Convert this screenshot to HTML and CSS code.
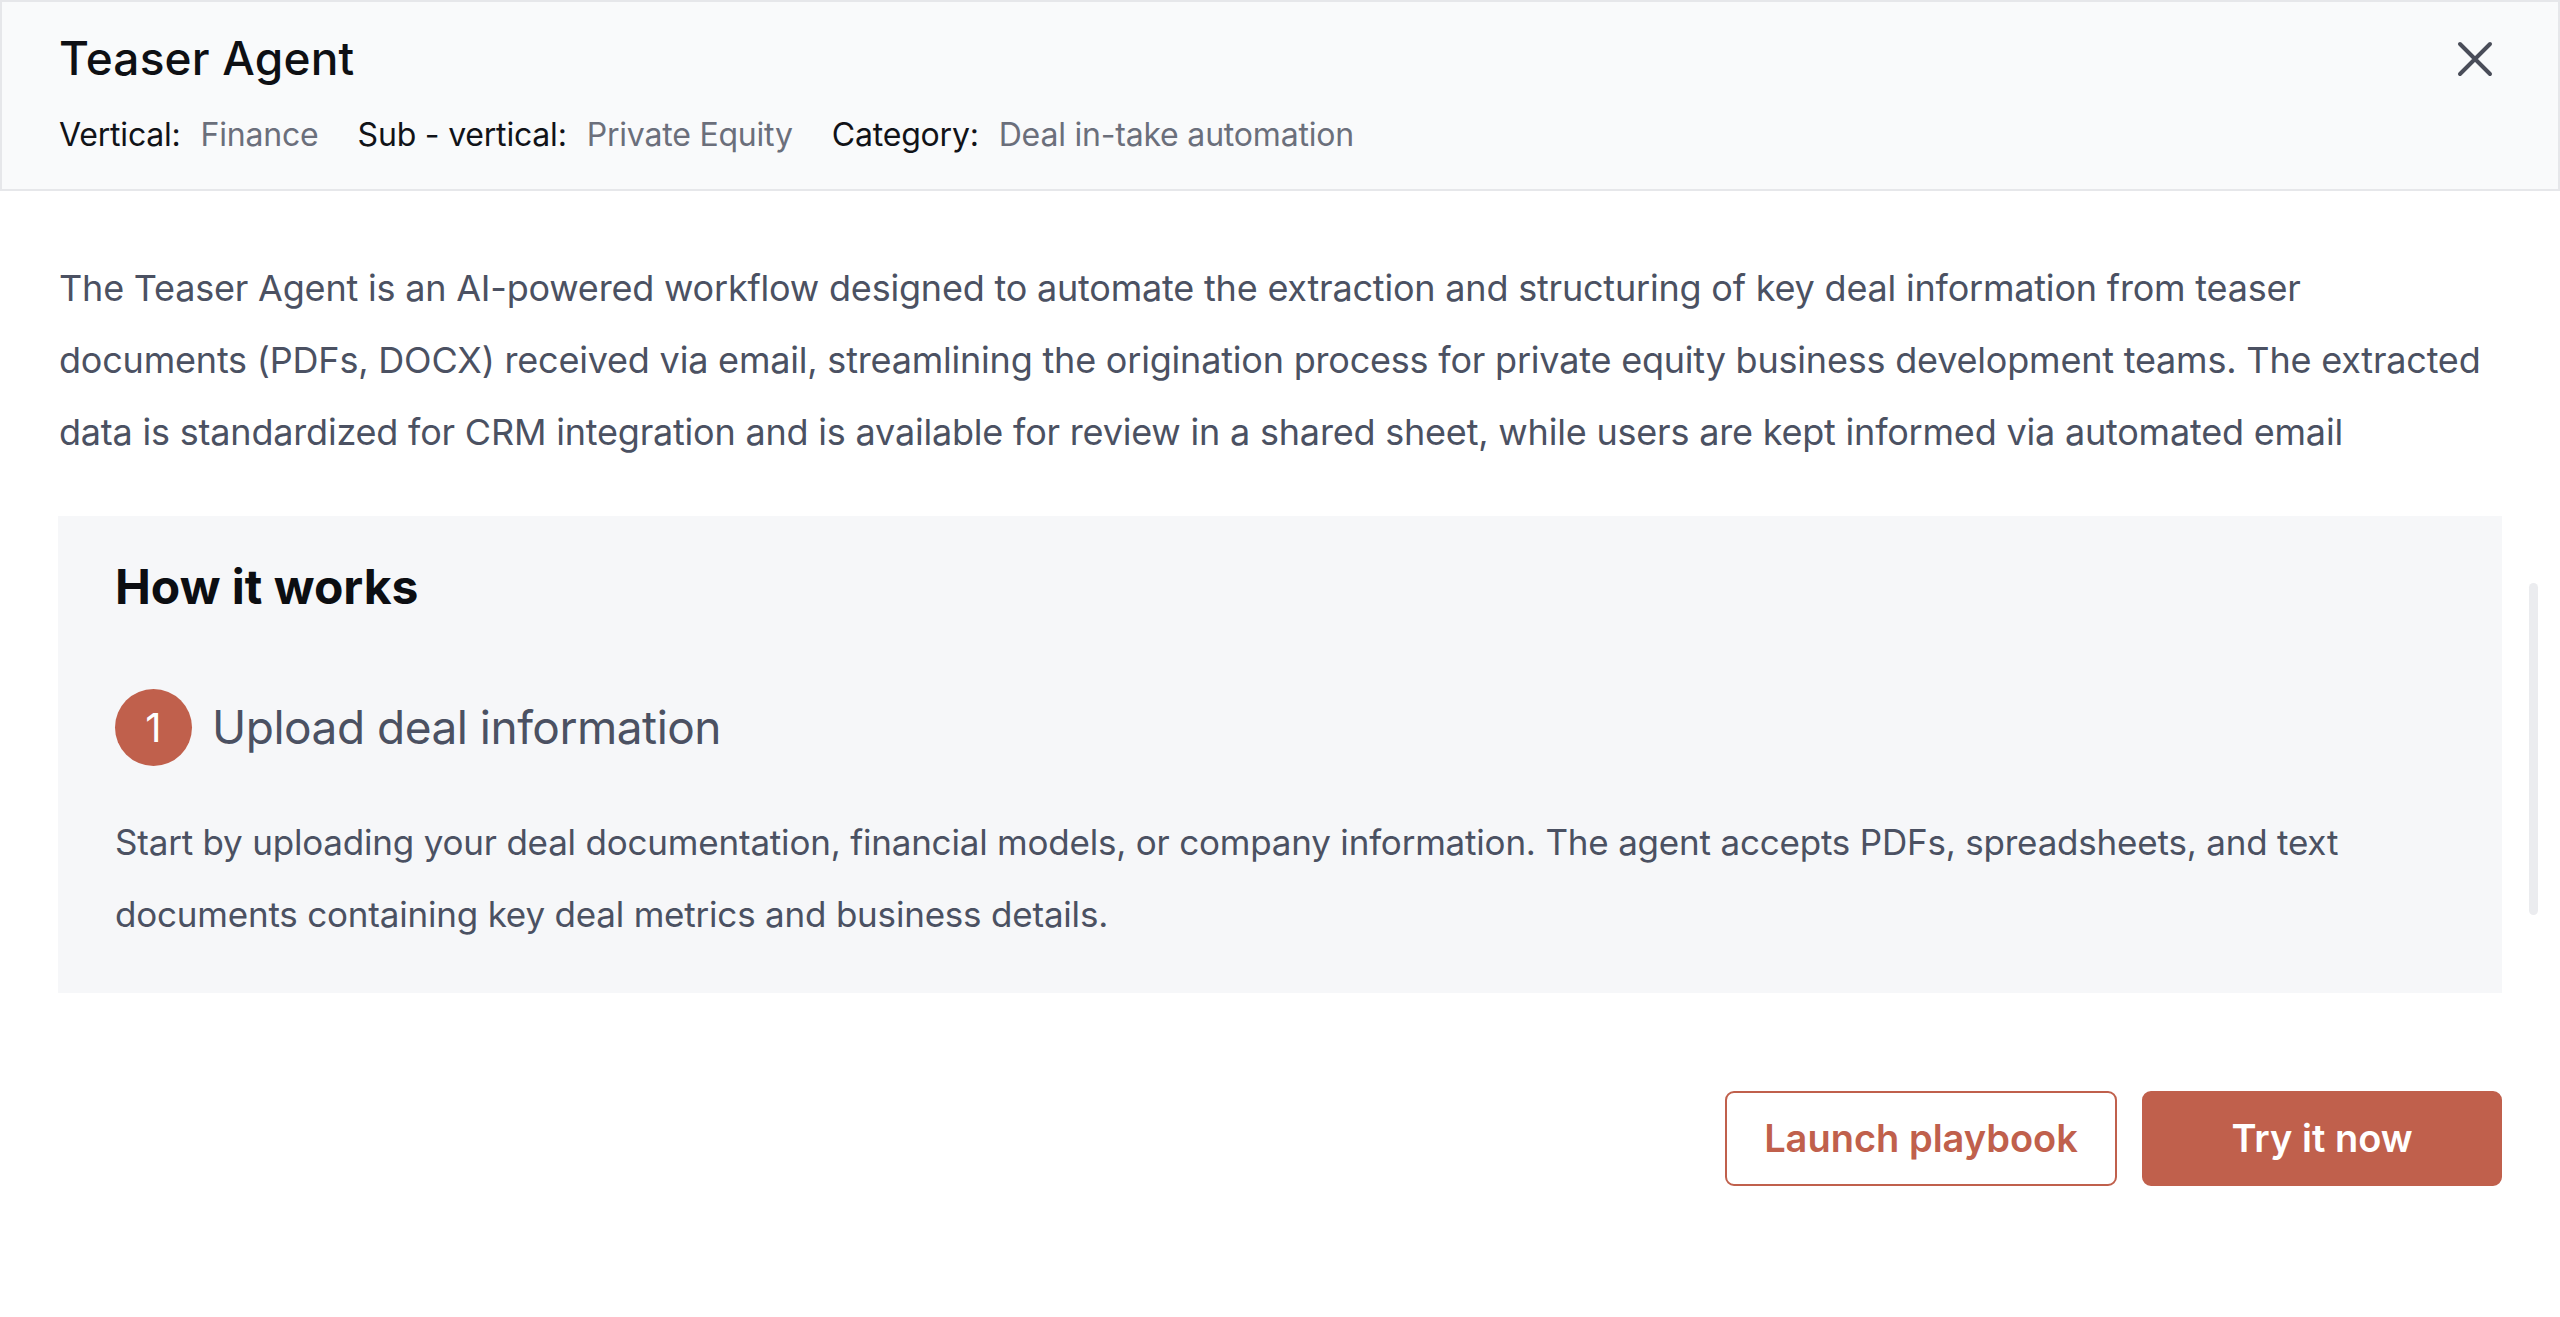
FILE: index.html
```html
<!DOCTYPE html>
<html lang="en">
<head>
<meta charset="utf-8">
<title>Teaser Agent</title>
<link rel="stylesheet" href="styles.css">
</head>
<body>
<div class="modal">
  <header class="header">
    <div class="header-text">
      <h1 class="title">Teaser Agent</h1>
      <div class="meta">
        <span class="meta-item"><span class="meta-label">Vertical:</span><span class="meta-value">Finance</span></span>
        <span class="meta-item"><span class="meta-label">Sub - vertical:</span><span class="meta-value">Private Equity</span></span>
        <span class="meta-item"><span class="meta-label">Category:</span><span class="meta-value">Deal in-take automation</span></span>
      </div>
    </div>
    <button class="close" aria-label="Close">
      <svg width="36" height="36" viewBox="0 0 36 36"><path d="M3 3 L33 33 M33 3 L3 33" stroke="#4a4d59" stroke-width="4" stroke-linecap="round" fill="none"/></svg>
    </button>
  </header>
  <main class="content">
    <p class="intro">The Teaser Agent is an AI-powered workflow designed to automate the extraction and structuring of key deal information from teaser documents (PDFs, DOCX) received via email, streamlining the origination process for private equity business development teams. The extracted data is standardized for CRM integration and is available for review in a shared sheet, while users are kept informed via automated email</p>
    <section class="how">
      <h2 class="how-title">How it works</h2>
      <div class="step">
        <span class="step-num">1</span>
        <h3 class="step-title">Upload deal information</h3>
      </div>
      <p class="step-text">Start by uploading your deal documentation, financial models, or company information. The agent accepts PDFs, spreadsheets, and text documents containing key deal metrics and business details.</p>
    </section>
    <div class="actions">
      <button class="btn btn-outline">Launch playbook</button>
      <button class="btn btn-solid">Try it now</button>
    </div>
  </main>
  <div class="scroll-thumb"></div>
</div>
</body>
</html>
```

FILE: styles.css
```css
* { box-sizing: border-box; }
html, body { margin: 0; padding: 0; background: #ffffff; }
body { font-family: Inter, "Noto Sans", sans-serif; color: #111318; }
.modal { position: relative; width: 2560px; min-height: 1317px; background: #fff; }

.header {
  height: 191px;
  background: #f9fafb;
  border: 2px solid #e6e7ea;
  padding: 29px 65px 0 57px;
  display: flex;
  justify-content: space-between;
  align-items: flex-start;
}
.title {
  margin: 0;
  font-size: 46px;
  line-height: 1.2;
  font-weight: 500;
  color: #0e1014;
  letter-spacing: 0.2px;
}
.meta {
  margin-top: 30px;
  display: flex;
  gap: 39px;
  font-size: 32px;
  line-height: 1.2;
  letter-spacing: -0.2px;
}
.meta-item { display: flex; gap: 20px; }
.meta-label { color: #111318; }
.meta-value { color: #6b6f7b; }
.close {
  margin-top: 10px;
  background: none;
  border: 0;
  padding: 0;
  width: 36px;
  height: 36px;
  cursor: pointer;
}
.close svg { display: block; }

.content { padding: 0 58px 0 59px; }
.intro {
  margin: 61px 0 0;
  max-width: 2430px;
  font-size: 36px;
  line-height: 72px;
  letter-spacing: -0.2px;
  color: #4b5162;
}
.how {
  margin-top: 48px;
  background: #f6f7f9;
  padding: 42px 58px 43px 57px;
  margin-left: -1px;
}
.how-title {
  margin: 0;
  font-size: 48px;
  line-height: 1.2;
  font-weight: 700;
  color: #0c0e12;
}
.step {
  margin-top: 73px;
  display: flex;
  align-items: center;
  gap: 20px;
}
.step-num {
  width: 77px;
  height: 77px;
  border-radius: 50%;
  background: #c0604c;
  color: #fff;
  font-size: 40px;
  font-weight: 400;
  display: flex;
  align-items: center;
  justify-content: center;
  flex: none;
}
.step-title {
  margin: 0;
  font-size: 46px;
  line-height: 1.2;
  font-weight: 400;
  letter-spacing: -0.5px;
  color: #4b5162;
}
.step-text {
  margin: 40px 0 0;
  font-size: 35px;
  line-height: 72px;
  letter-spacing: -0.2px;
  color: #4b5162;
}
.actions {
  margin-top: 98px;
  display: flex;
  justify-content: flex-end;
  gap: 25px;
}
.btn {
  height: 95px;
  border-radius: 9px;
  font-family: Inter, "Noto Sans", sans-serif;
  font-size: 38px;
  font-weight: 600;
  cursor: pointer;
}
.btn-outline {
  width: 392px;
  background: #fff;
  color: #c0604c;
  border: 2px solid #c0604c;
}
.btn-solid {
  width: 360px;
  background: #c0604c;
  color: #fff;
  border: 2px solid #c0604c;
}
.scroll-thumb {
  position: absolute;
  left: 2529px;
  top: 583px;
  width: 9px;
  height: 332px;
  border-radius: 5px;
  background: #ebecef;
}
```
